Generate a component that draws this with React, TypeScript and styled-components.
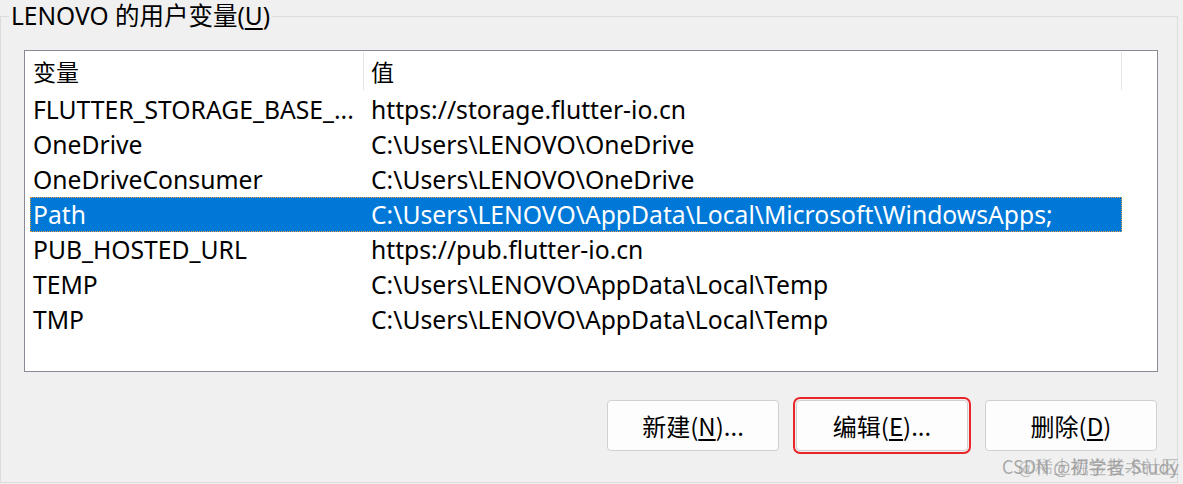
import React from "react";
import styled, { createGlobalStyle } from "styled-components";

const GlobalStyle = createGlobalStyle`
  html, body {
    margin: 0;
    padding: 0;
    background: #f0f0f0;
  }
  body {
    font-family: "Noto Sans", "Noto Sans CJK SC", sans-serif;
    color: #000;
  }
`;

const Page = styled.div`
  width: 1183px;
  height: 484px;
  position: relative;
  overflow: hidden;
`;

const Group = styled.fieldset`
  margin: 0;
  width: 1178px;
  height: 483px;
  box-sizing: border-box;
  border: 1px solid #dcdcdc;
  padding: 18px 19px 0 23px;
  display: flex;
  flex-direction: column;
`;

const Legend = styled.legend`
  margin-left: -15px;
  padding: 0 2px;
  font-size: 24.5px;
  line-height: 32px;
  .u { text-decoration: underline; text-underline-offset: 3px; }
`;

const ListBox = styled.div`
  height: 322px;
  border: 1px solid #8a8a96;
  background: #fff;
  box-sizing: border-box;
  padding-left: 5px;
`;

const Row = styled.div<{ $selected?: boolean; $header?: boolean }>`
  display: grid;
  grid-template-columns: 334px 758px;
  width: 1092px;
  height: ${({ $header }) => ($header ? "40px" : "35px")};
  margin-bottom: ${({ $header }) => ($header ? "1px" : "0")};
  align-items: center;
  font-size: 24.7px;
  box-sizing: border-box;
  background: ${({ $selected }) => ($selected ? "#0078d7" : "transparent")};
  color: ${({ $selected }) => ($selected ? "#fff" : "#000")};
  outline: ${({ $selected }) => ($selected ? "1px dotted #e9a13b" : "none")};
  outline-offset: -1px;
`;

const Cell = styled.div<{ $divider?: boolean; $pad: number }>`
  height: 100%;
  display: flex;
  align-items: center;
  padding-left: ${({ $pad }) => $pad}px;
  white-space: nowrap;
  overflow: hidden;
  border-right: ${({ $divider }) => ($divider ? "1px solid #e5e5e5" : "none")};
  box-sizing: border-box;
`;

const HeaderCell = styled(Cell)`
  height: 38px;
  align-self: start;
  margin-top: 1px;
  font-family: "Noto Sans CJK SC", sans-serif;
  font-size: 23px;
`;

const Buttons = styled.div`
  display: flex;
  justify-content: flex-end;
  gap: 17px;
  margin-top: 28px;
  padding-right: 1px;
`;

const Button = styled.button<{ $focused?: boolean }>`
  width: 172px;
  height: 51px;
  background: #fdfdfd;
  border: 1px solid #d0d0d0;
  border-radius: 4px;
  font-family: "Noto Sans CJK SC", "Noto Sans", sans-serif;
  font-size: 24px;
  color: #000;
  padding: 0;
  outline: ${({ $focused }) => ($focused ? "2px solid #e8262a" : "none")};
  outline-offset: 1px;
  .u { text-decoration: underline; text-underline-offset: 3px; }
`;

const Watermark = styled.div`
  position: absolute;
  right: 4px;
  bottom: 7px;
  font-family: "Noto Sans CJK SC", sans-serif;
  font-size: 18px;
  line-height: 22px;
  color: rgba(150, 150, 150, 0.8);
  white-space: nowrap;
`;

const WatermarkOver = styled.span`
  position: absolute;
  right: 0;
  top: 0;
  color: rgba(150, 150, 150, 0.55);
`;

const vars: [string, string][] = [
  ["FLUTTER_STORAGE_BASE_...", "https://storage.flutter-io.cn"],
  ["OneDrive", "C:\\Users\\LENOVO\\OneDrive"],
  ["OneDriveConsumer", "C:\\Users\\LENOVO\\OneDrive"],
  ["Path", "C:\\Users\\LENOVO\\AppData\\Local\\Microsoft\\WindowsApps;"],
  ["PUB_HOSTED_URL", "https://pub.flutter-io.cn"],
  ["TEMP", "C:\\Users\\LENOVO\\AppData\\Local\\Temp"],
  ["TMP", "C:\\Users\\LENOVO\\AppData\\Local\\Temp"],
];

export default function App() {
  return (
    <Page>
      <GlobalStyle />
      <Group>
        <Legend>
          LENOVO 的用户变量(<span className="u">U</span>)
        </Legend>
        <ListBox>
          <Row $header>
            <HeaderCell $pad={3} $divider>变量</HeaderCell>
            <HeaderCell $pad={7} $divider>值</HeaderCell>
          </Row>
          {vars.map(([name, value]) => (
            <Row key={name} $selected={name === "Path"}>
              <Cell $pad={3}>{name}</Cell>
              <Cell $pad={7}>{value}</Cell>
            </Row>
          ))}
        </ListBox>
        <Buttons>
          <Button>
            新建(<span className="u">N</span>)...
          </Button>
          <Button $focused>
            编辑(<span className="u">E</span>)...
          </Button>
          <Button>
            删除(<span className="u">D</span>)
          </Button>
        </Buttons>
      </Group>
      <Watermark>
        CSDN @初学者-Study
        <WatermarkOver>@稀土掘金技术社区</WatermarkOver>
      </Watermark>
    </Page>
  );
}
